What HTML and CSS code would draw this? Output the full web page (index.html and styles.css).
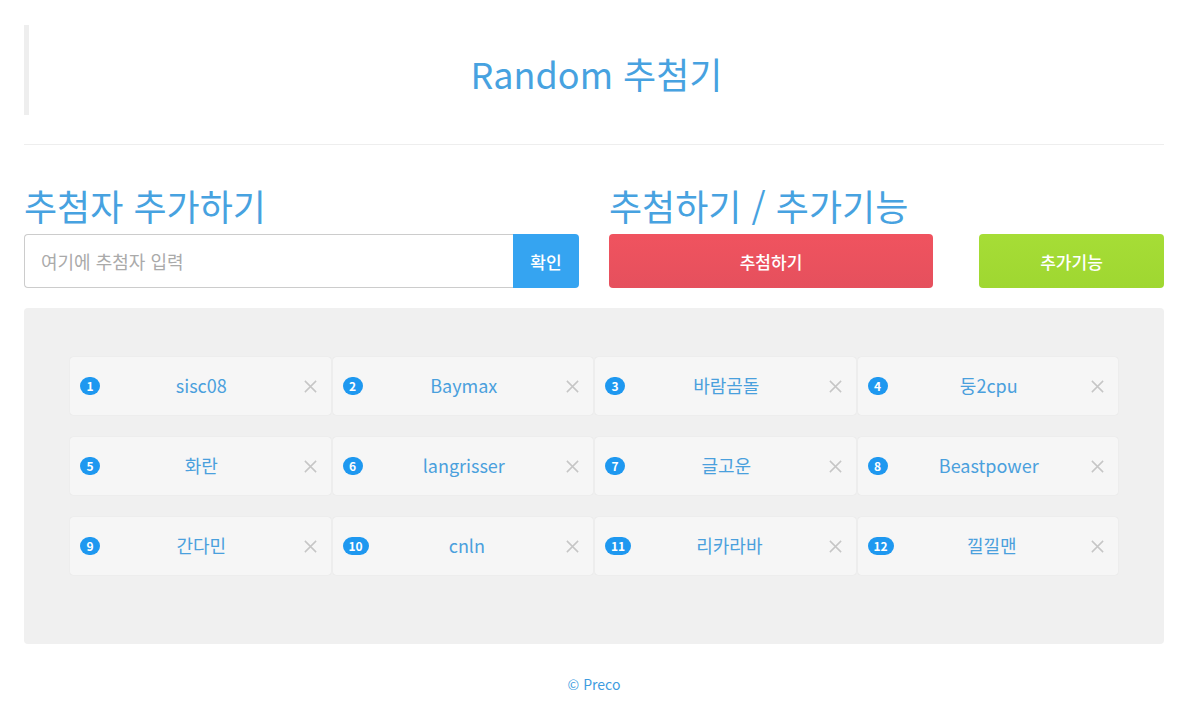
FILE: index.html
```html
<!DOCTYPE html>
<html lang="ko">
<head>
    <meta charset="UTF-8">
    <meta name="viewport" content="width=device-width, initial-scale=1.0">
    <title>Random 추첨기</title>
    <link rel="stylesheet" href="styles.css">
</head>
<body>
    <div class="container">
        <blockquote class="page-header">
            <h1>Random 추첨기</h1>
        </blockquote>
        <hr>

        <div class="row">
            <section class="col">
                <h2>추첨자 추가하기</h2>
                <div class="input-group">
                    <input type="text" id="nameInput" placeholder="여기에 추첨자 입력">
                    <button class="btn btn-add">확인</button>
                </div>
            </section>
            <section class="col">
                <h2>추첨하기 / 추가기능</h2>
                <div class="actions">
                    <button class="btn btn-draw">추첨하기</button>
                    <button class="btn btn-extra">추가기능</button>
                </div>
            </section>
        </div>

        <div class="board">
            <ul class="people" id="people">
                <!-- cards are filled in below -->
            </ul>
        </div>

        <footer>© Preco</footer>
    </div>

    <script>
        const names = ['sisc08', 'Baymax', '바람곰돌', '둥2cpu', '화란', 'langrisser',
            '글고운', 'Beastpower', '간다민', 'cnln', '리카라바', '낄낄맨'];
        const list = document.getElementById('people');

        names.forEach(function (name, i) {
            const li = document.createElement('li');
            li.className = 'person';
            li.innerHTML = `
                <span class="badge">${i + 1}</span>
                <span class="name">${name}</span>
                <svg class="remove" viewBox="0 0 16 16" width="16" height="16">
                    <path d="M2 2 L14 14 M14 2 L2 14" stroke="currentColor" stroke-width="1.6" fill="none"/>
                </svg>
            `;
            list.appendChild(li);
        });
    </script>
</body>
</html>
```

FILE: styles.css
```css
body {
    font-family: "Noto Sans CJK KR", "Noto Sans", sans-serif;
    background-color: #fff;
    color: #333;
    margin: 0;
    padding: 0;
}

.container {
    width: 1140px;
    margin: 0 24px;
}

.page-header {
    margin: 25px 0 0;
    height: 90px;
    box-sizing: border-box;
    padding-top: 6px;
    border-left: 5px solid #eee;
    display: flex;
    align-items: center;
    justify-content: center;
}

h1 {
    font-size: 36px;
    font-weight: 400;
    color: #47a2e0;
    margin: 0;
    line-height: 1;
}

hr {
    border: 0;
    border-top: 1px solid #eee;
    margin: 29px 0 0;
}

.row {
    display: flex;
    gap: 30px;
}

.col {
    flex: 1;
}

h2 {
    font-size: 36px;
    font-weight: 400;
    color: #47a2e0;
    margin: 39px 0 7px;
    line-height: 43px;
}

.input-group {
    display: flex;
    height: 54px;
}

.input-group input[type="text"] {
    flex: 1;
    border: 1px solid #ccc;
    border-right: none;
    border-radius: 4px 0 0 4px;
    padding: 0 16px;
    font-family: inherit;
    font-size: 18px;
    color: #555;
    outline: none;
}

.input-group input::placeholder {
    color: #aaa;
}

.btn {
    border: none;
    color: #fff;
    font-family: inherit;
    font-size: 17px;
    font-weight: 500;
    cursor: pointer;
    border-radius: 4px;
    height: 54px;
}

.btn-add {
    width: 66px;
    background-color: #35a4f1;
    border-radius: 0 4px 4px 0;
}

.actions {
    display: flex;
    justify-content: space-between;
}

.btn-draw {
    width: 324px;
    background: linear-gradient(#f0535f, #e5505d);
}

.btn-extra {
    width: 185px;
    background: linear-gradient(#a6dd36, #9fd731);
}

.board {
    margin-top: 20px;
    background-color: #f0f0f0;
    border-radius: 4px;
    padding: 49px 46px 69px;
}

.people {
    list-style: none;
    margin: 0;
    padding: 0;
    display: grid;
    grid-template-columns: repeat(4, 1fr);
    column-gap: 2px;
    row-gap: 22px;
}

.person {
    height: 58px;
    background-color: #f6f6f6;
    border-radius: 3px;
    box-shadow: 0 0 1px rgba(0, 0, 0, 0.12);
    display: flex;
    align-items: center;
    padding: 0 13px 0 10px;
}

.badge {
    min-width: 20px;
    height: 18px;
    padding: 0 6px;
    box-sizing: border-box;
    border-radius: 9px;
    background-color: #1e98f0;
    color: #fff;
    font-size: 12px;
    font-weight: 700;
    line-height: 18px;
    text-align: center;
}

.name {
    flex: 1;
    text-align: center;
    font-size: 18px;
    color: #4aa0dd;
    margin-top: -3px;
}

.remove {
    color: #c6c6c6;
    width: 15px;
    height: 15px;
}

footer {
    text-align: center;
    font-size: 14px;
    color: #3d9ce0;
    margin-top: 30px;
}
```
